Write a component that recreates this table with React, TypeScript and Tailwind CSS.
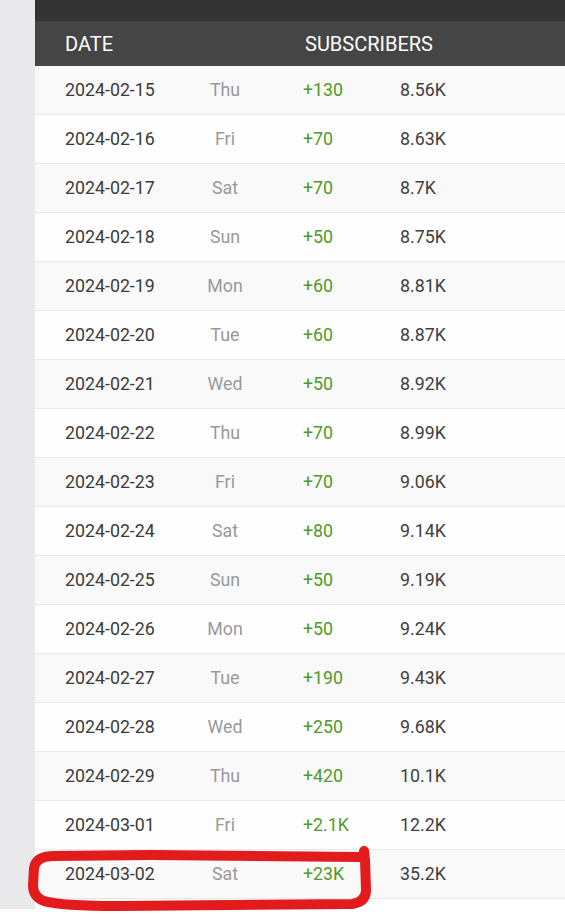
const rows = [
  { date: "2024-02-15", day: "Thu", change: "+130", total: "8.56K" },
  { date: "2024-02-16", day: "Fri", change: "+70", total: "8.63K" },
  { date: "2024-02-17", day: "Sat", change: "+70", total: "8.7K" },
  { date: "2024-02-18", day: "Sun", change: "+50", total: "8.75K" },
  { date: "2024-02-19", day: "Mon", change: "+60", total: "8.81K" },
  { date: "2024-02-20", day: "Tue", change: "+60", total: "8.87K" },
  { date: "2024-02-21", day: "Wed", change: "+50", total: "8.92K" },
  { date: "2024-02-22", day: "Thu", change: "+70", total: "8.99K" },
  { date: "2024-02-23", day: "Fri", change: "+70", total: "9.06K" },
  { date: "2024-02-24", day: "Sat", change: "+80", total: "9.14K" },
  { date: "2024-02-25", day: "Sun", change: "+50", total: "9.19K" },
  { date: "2024-02-26", day: "Mon", change: "+50", total: "9.24K" },
  { date: "2024-02-27", day: "Tue", change: "+190", total: "9.43K" },
  { date: "2024-02-28", day: "Wed", change: "+250", total: "9.68K" },
  { date: "2024-02-29", day: "Thu", change: "+420", total: "10.1K" },
  { date: "2024-03-01", day: "Fri", change: "+2.1K", total: "12.2K" },
  { date: "2024-03-02", day: "Sat", change: "+23K", total: "35.2K" },
];

const App = () => {
  return (
    <div className="relative w-[565px] h-[914px] overflow-hidden bg-white font-['Roboto',sans-serif]">
      <div className="flex">
        <div className="w-[35px] h-[909px] bg-[#e9e9eb]" />
        <div className="flex-1">
          <div className="h-[21px] bg-[#333333]" />
          <div className="h-[45px] bg-[#454545] flex items-center pl-[30px] text-white text-[20px]">
            <span className="w-[240px]">DATE</span>
            <span>SUBSCRIBERS</span>
          </div>
          {rows.map((row, index) => (
            <div
              key={index}
              className={`h-[49px] flex items-center pl-[30px] border-b border-[#e9e9e9] text-[17.8px] ${
                index % 2 === 0 ? "bg-[#f9f9f9]" : "bg-[#fefefe]"
              }`}
            >
              <span className="w-[130px] text-[#3b3b3b]">{row.date}</span>
              <span className="w-[60px] text-center text-[#999999]">{row.day}</span>
              <span className="ml-[48px] w-[97px] text-[#4f9a2a]">{row.change}</span>
              <span className="text-[#3f3f3f]">{row.total}</span>
            </div>
          ))}
        </div>
      </div>

      {/* red marker loop around the last row */}
      <svg className="absolute left-0 top-0 pointer-events-none" width="565" height="914">
        <path
          d="M 364 851 L 365 860 L 366 890 Q 366 902 352 904 L 120 906 Q 60 906 44 901 Q 33 897 33 885 L 34 868 Q 36 856 54 856 L 150 855 L 360 857"
          fill="none"
          stroke="#e41b1d"
          strokeWidth="10"
          strokeLinecap="round"
          strokeLinejoin="round"
        />
      </svg>
    </div>
  );
};

export default App;
